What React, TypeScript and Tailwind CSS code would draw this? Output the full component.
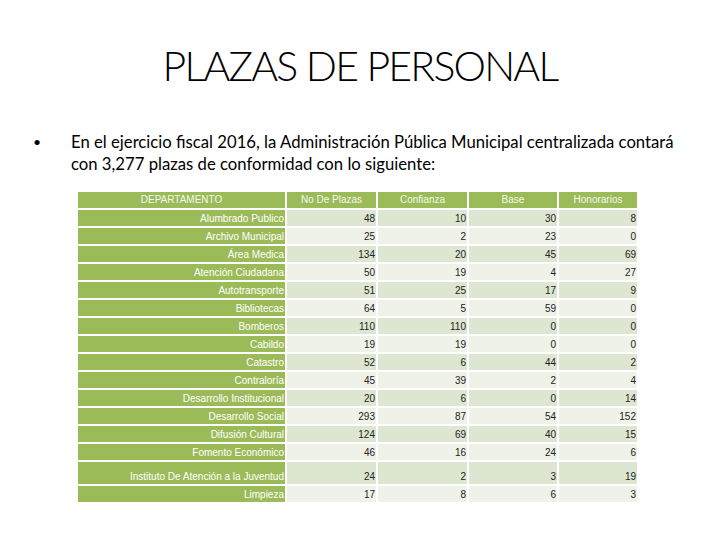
const rows: { dept: string; plazas: number; confianza: number; base: number; honorarios: number; tall?: boolean }[] = [
  { dept: 'Alumbrado Publico', plazas: 48, confianza: 10, base: 30, honorarios: 8 },
  { dept: 'Archivo Municipal', plazas: 25, confianza: 2, base: 23, honorarios: 0 },
  { dept: 'Área Medica', plazas: 134, confianza: 20, base: 45, honorarios: 69 },
  { dept: 'Atención Ciudadana', plazas: 50, confianza: 19, base: 4, honorarios: 27 },
  { dept: 'Autotransporte', plazas: 51, confianza: 25, base: 17, honorarios: 9 },
  { dept: 'Bibliotecas', plazas: 64, confianza: 5, base: 59, honorarios: 0 },
  { dept: 'Bomberos', plazas: 110, confianza: 110, base: 0, honorarios: 0 },
  { dept: 'Cabildo', plazas: 19, confianza: 19, base: 0, honorarios: 0 },
  { dept: 'Catastro', plazas: 52, confianza: 6, base: 44, honorarios: 2 },
  { dept: 'Contraloría', plazas: 45, confianza: 39, base: 2, honorarios: 4 },
  { dept: 'Desarrollo Institucional', plazas: 20, confianza: 6, base: 0, honorarios: 14 },
  { dept: 'Desarrollo Social', plazas: 293, confianza: 87, base: 54, honorarios: 152 },
  { dept: 'Difusión Cultural', plazas: 124, confianza: 69, base: 40, honorarios: 15 },
  { dept: 'Fomento Económico', plazas: 46, confianza: 16, base: 24, honorarios: 6 },
  { dept: 'Instituto De Atención a la Juventud', plazas: 24, confianza: 2, base: 3, honorarios: 19, tall: true },
  { dept: 'Limpieza', plazas: 17, confianza: 8, base: 6, honorarios: 3 },
];

export default function App() {
  return (
    <div className="w-[720px] h-[540px] bg-white overflow-hidden flex flex-col font-['Liberation_Sans',sans-serif]">
      {/* Title */}
      <h1 className="mt-[40px] h-[52px] text-center text-[41px] leading-[52px] tracking-[-1.8px] font-light text-black font-['Lato',sans-serif]">
        PLAZAS DE PERSONAL
      </h1>

      {/* Bullet */}
      <div className="mt-[39px] flex text-[16.7px] leading-[22px] text-black font-['Lato',sans-serif]">
        <span className="w-[71px] pl-[33px] text-[14px]">•</span>
        <p>
          En el ejercicio fiscal 2016, la Administración Pública Municipal centralizada contará
          <br />
          con 3,277 plazas de conformidad con lo siguiente:
        </p>
      </div>

      {/* Table */}
      <div className="mt-[17px] ml-[78px] grid grid-cols-[207px_89px_89px_88px_78px] gap-[2px] text-[10px] leading-[12px]">
        {['DEPARTAMENTO', 'No De Plazas', 'Confianza', 'Base', 'Honorarios'].map((h) => (
          <div key={h} className="h-[16px] bg-[#9bbb59] text-[#f4f8ec] flex items-center justify-center">
            {h}
          </div>
        ))}
        {rows.map((r, i) => {
          const tint = i % 2 === 0 ? 'bg-[#dde6d1]' : 'bg-[#eef2e8]';
          const h = r.tall ? 'h-[22px]' : 'h-[16px]';
          return [
            <div key={r.dept} className={`${h} bg-[#9bbb59] text-white flex items-end justify-end pb-[1px] pr-[1px]`}>
              {r.dept}
            </div>,
            ...[r.plazas, r.confianza, r.base, r.honorarios].map((v, j) => (
              <div key={r.dept + j} className={`${h} ${tint} text-[#222] flex items-end justify-end pb-[1px] pr-[1px]`}>
                {v}
              </div>
            )),
          ];
        })}
      </div>
    </div>
  );
}
